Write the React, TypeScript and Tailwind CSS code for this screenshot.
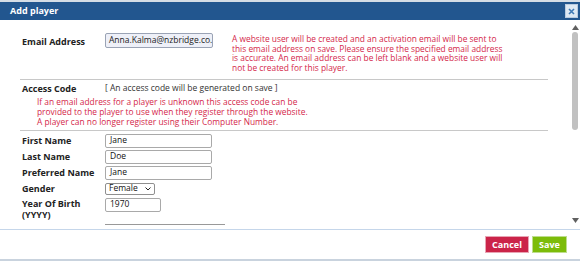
import React from "react";

const font = { fontFamily: '"Open Sans", "DejaVu Sans", sans-serif' };

function Input({ value, w }: { value: string; w: string }) {
  return (
    <div className={`${w} h-[14px] border border-[#a9a9a9] rounded-[2px] bg-white flex items-center px-[4px] text-[8.5px] text-[#111]`}>
      {value}
    </div>
  );
}

export default function App() {
  return (
    <div className="w-[580px] h-[261px] bg-white flex flex-col border-t-2 border-b-2 border-t-[#d5dde6] border-b-[#c9d3de] overflow-hidden" style={font}>
      <div className="h-[18px] bg-[#22568f] flex items-center justify-between pl-[10px] pr-[2px] shrink-0">
        <span className="text-white font-bold text-[9px]">Add player</span>
        <div className="w-[13px] h-[14px] bg-[#dde8f3] border border-[#b9cbe0] flex items-center justify-center">
          <svg width="7" height="7" viewBox="0 0 7 7">
            <path d="M1 1 L6 6 M6 1 L1 6" stroke="#3f79b5" strokeWidth="1.6" />
          </svg>
        </div>
      </div>
      <div className="flex-1 flex min-h-0">
        <div className="flex-1 overflow-hidden">
          <div className="pl-[20px] pr-[22px]">
            <div className="flex pt-[13px] pb-[7px] border-b border-[#c8c8c8]">
              <div className="w-[85px] pl-[2px] pt-[2px] font-bold text-[9px] text-[#222] shrink-0">Email Address</div>
              <div className="w-[108px] h-[15px] border border-[#9aa3b5] rounded-[2px] bg-[#eef0f8] flex items-center px-[3px] text-[8.5px] text-[#222] overflow-hidden whitespace-nowrap shrink-0">
                Anna.Kalma@nzbridge.co.
              </div>
              <div className="ml-[19px] text-[8.4px] leading-[9.5px] text-[#d41f4a] whitespace-nowrap pt-[1px]">
                A website user will be created and an activation email will be sent to<br />
                this email address on save. Please ensure the specified email address<br />
                is accurate. An email address can be left blank and a website user will<br />
                not be created for this player.
              </div>
            </div>
            <div className="pt-[2px] pb-[3px] border-b border-[#c8c8c8]">
              <div className="flex">
                <div className="w-[85px] pl-[2px] font-bold text-[9px] text-[#222] shrink-0">Access Code</div>
                <div className="text-[8.5px] text-[#333]">[ An access code will be generated on save ]</div>
              </div>
              <div className="pl-[17px] pt-[1px] text-[8.4px] leading-[10px] text-[#d41f4a] whitespace-nowrap">
                If an email address for a player is unknown this access code can be<br />
                provided to the player to use when they register through the website.<br />
                A player can no longer register using their Computer Number.
              </div>
            </div>
            <div className="pl-[2px] pt-[3px] flex flex-col gap-[2px]">
              <div className="flex items-center h-[14px]">
                <div className="w-[83px] font-bold text-[9px] text-[#222]">First Name</div>
                <Input value="Jane" w="w-[107px]" />
              </div>
              <div className="flex items-center h-[14px]">
                <div className="w-[83px] font-bold text-[9px] text-[#222]">Last Name</div>
                <Input value="Doe" w="w-[107px]" />
              </div>
              <div className="flex items-center h-[14px]">
                <div className="w-[83px] font-bold text-[9px] text-[#222]">Preferred Name</div>
                <Input value="Jane" w="w-[107px]" />
              </div>
              <div className="flex items-center h-[14px]">
                <div className="w-[83px] font-bold text-[9px] text-[#222]">Gender</div>
                <div className="w-[50px] h-[12px] border border-[#8f8f8f] rounded-[2px] bg-white flex items-center justify-between px-[3px] text-[8.5px] text-[#111]">
                  <span>Female</span>
                  <svg width="6" height="4" viewBox="0 0 6 4"><path d="M0.5 0.5 L3 3 L5.5 0.5" fill="none" stroke="#222" strokeWidth="1" /></svg>
                </div>
              </div>
              <div className="flex items-start">
                <div className="w-[83px] font-bold text-[9px] leading-[11.5px] text-[#222]">Year Of Birth<br />(YYYY)</div>
                <Input value="1970" w="w-[56px]" />
              </div>
              <div className="ml-[83px] mt-[1px] w-[120px] border-b border-[#999]"></div>
            </div>
          </div>
        </div>
        <div className="w-[10px] shrink-0 flex flex-col items-center pt-[5px] pb-[6px]">
          <svg width="7" height="5" viewBox="0 0 7 5"><path d="M0 5 L3.5 0 L7 5 Z" fill="#606060" /></svg>
          <div className="w-[6px] h-[98px] mt-[2px] rounded-[3px] bg-[#c1c1c1]"></div>
          <div className="flex-1"></div>
          <svg width="7" height="5" viewBox="0 0 7 5"><path d="M0 0 L3.5 5 L7 0 Z" fill="#606060" /></svg>
        </div>
      </div>
      <div className="h-[30px] shrink-0 border-t border-[#c5d6ea] flex items-center justify-end gap-[3px] pr-[13px]">
        <button className="w-[44px] h-[17px] bg-[#cb2449] text-white font-bold text-[9px] border border-[#e8a5b4]">Cancel</button>
        <button className="w-[35px] h-[17px] bg-[#7cbc0a] text-white font-bold text-[9px] border border-[#bedd8e]">Save</button>
      </div>
    </div>
  );
}
